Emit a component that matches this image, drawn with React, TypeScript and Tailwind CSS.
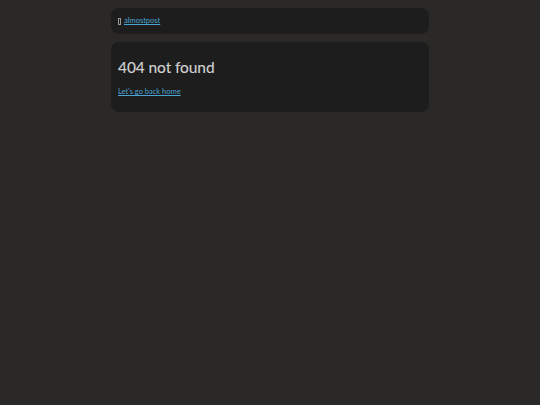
import React from 'react';

export default function App() {
  return (
    <div
      className="min-h-screen w-full bg-[#2a2927] pt-[8px]"
      style={{ fontFamily: 'Lato, "Noto Sans", sans-serif' }}
    >
      <div className="mx-auto flex w-[318px] flex-col gap-[8px]">
        <header className="flex h-[26px] items-center rounded-[8px] bg-[#1d1d1d] px-[7px]">
          <span className="mr-[3px] inline-block h-[7px] w-[3px] border border-[#9a9a9a]" />
          <a href="#" className="text-[7.5px] leading-none text-[#4aa3d3] underline">
            almostpost
          </a>
        </header>

        <main className="h-[70px] rounded-[8px] bg-[#1d1d1d] px-[7px] pt-[14px]">
          <h1 className="text-[15.5px] leading-[22px] font-medium tracking-[-0.1px] text-[#cfcfcf]">404 not found</h1>
          <a href="#" className="mt-[10px] block text-[7.5px] leading-none text-[#4aa3d3] underline">
            Let&apos;s go back home
          </a>
        </main>
      </div>
    </div>
  );
}
